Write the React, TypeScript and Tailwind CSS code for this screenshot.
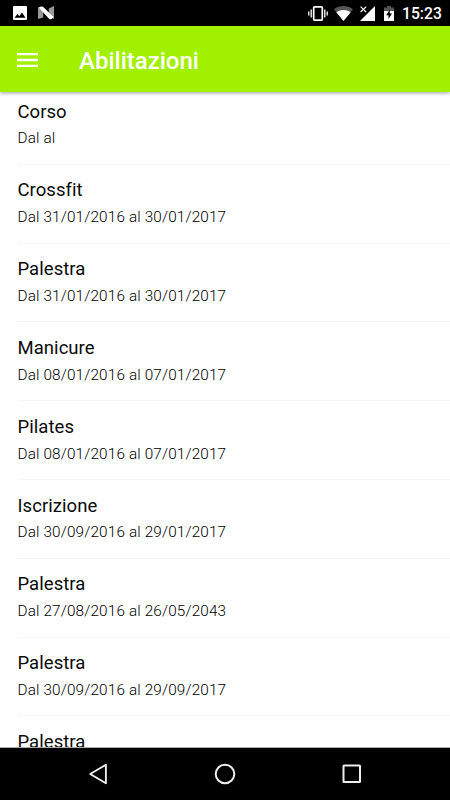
const items = [
  { name: 'Corso', dates: 'Dal al' },
  { name: 'Crossfit', dates: 'Dal 31/01/2016 al 30/01/2017' },
  { name: 'Palestra', dates: 'Dal 31/01/2016 al 30/01/2017' },
  { name: 'Manicure', dates: 'Dal 08/01/2016 al 07/01/2017' },
  { name: 'Pilates', dates: 'Dal 08/01/2016 al 07/01/2017' },
  { name: 'Iscrizione', dates: 'Dal 30/09/2016 al 29/01/2017' },
  { name: 'Palestra', dates: 'Dal 27/08/2016 al 26/05/2043' },
  { name: 'Palestra', dates: 'Dal 30/09/2016 al 29/09/2017' },
  { name: 'Palestra', dates: '' },
];

function StatusBar() {
  return (
    <div className="flex h-[26px] shrink-0 items-center bg-black pl-[13px] pr-[9px] text-white">
      <svg className="h-[14px] w-[14px]" viewBox="0 0 14 14">
        <rect width="14" height="14" rx="1" fill="#fff" />
        <path d="M1.500 11.800L4.500 8l1.800 2.200L9 6.500l3.500 5.300z" fill="#000" />
      </svg>
      <svg className="ml-[11px] h-[14px] w-4" viewBox="0 0 16 14">
        <path d="M0 1l5.200 5v5.500L0 13z" fill="#999" />
        <path d="M16 0v13l-5.200-5V2.500z" fill="#999" />
        <path d="M.5 1.500Q3 .2 5 .8L15.800 11.300Q13.500 13.800 11.300 13z" fill="#fff" />
      </svg>
      <div className="grow" />
      <svg className="h-[15px] w-5" viewBox="0 0 20 15">
        <rect x="5.700" y=".9" width="8.600" height="13.200" rx="1" fill="none" stroke="#fff" strokeWidth="1.700" />
        <path d="M3.200 3.500v8M16.800 3.500v8M.8 5.500v4M19.200 5.500v4" stroke="#fff" strokeWidth="1.300" />
      </svg>
      <svg className="ml-[6px] h-[15px] w-[19px]" viewBox="0 0 19 15">
        <path d="M0 3.200C5.500-1 13.500-1 19 3.200L9.500 15z" fill="#555" />
        <path d="M2.400 6.200c4.200-3 10-3 14.200 0L9.500 15z" fill="#fff" />
      </svg>
      <svg className="ml-[7px] h-[15px] w-[15px]" viewBox="0 0 15 15">
        <path d="M15 0v15H0z" fill="#fff" />
        <path d="M0 0h8v7H0z" fill="#000" />
        <path d="M.6 .6l5.600 5.600M6.200 .6L.6 6.200" stroke="#fff" strokeWidth="1.200" />
      </svg>
      <svg className="ml-[9px] h-[15px] w-[10px]" viewBox="0 0 10 15">
        <path d="M3 0h4v1.500h3V5H0V1.500h3z" fill="#555" />
        <path d="M0 5h10v10H0z" fill="#fff" />
        <path d="M5.800 3.500L2.200 9.200h2.300V13l3.500-5.600H5.800z" fill="#000" />
      </svg>
      <span className="ml-[8px] w-[39px] whitespace-nowrap pt-[2px] text-[15.700px] leading-[26px] font-medium">15:23</span>
    </div>
  );
}

function Header() {
  return (
    <header className="z-10 flex h-[66px] shrink-0 items-center bg-[#a0f000] pl-[17px] shadow-[0_1px_4px_rgba(0,0,0,0.4)]">
      <svg className="mt-[2px] h-[14px] w-[21px]" viewBox="0 0 21 14">
        <path d="M0 1.200h21M0 7h21M0 12.800h21" stroke="#fff" strokeWidth="2.300" />
      </svg>
      <h1 className="mt-[3px] ml-[41px] text-[24px] leading-[30px] font-medium text-white">Abilitazioni</h1>
    </header>
  );
}

function NavigationBar() {
  return (
    <nav className="flex h-[53px] shrink-0 items-center border-t border-[#aaa] bg-black pl-[87px]">
      <svg className="h-[22px] w-[22px]" viewBox="0 0 22 22">
        <path d="M18.900 1.700v18.600L3.200 11z" fill="none" stroke="#eee" strokeWidth="1.900" strokeLinejoin="round" />
      </svg>
      <svg className="ml-[105px] h-[22px] w-[22px]" viewBox="0 0 22 22">
        <circle cx="11" cy="11" r="9.300" fill="none" stroke="#eee" strokeWidth="2" />
      </svg>
      <svg className="ml-[105px] h-[22px] w-[22px]" viewBox="0 0 22 22">
        <rect x="2.500" y="2.500" width="16.500" height="16.500" rx=".5" fill="none" stroke="#eee" strokeWidth="2" />
      </svg>
    </nav>
  );
}

export default function App() {
  return (
    <div className="flex h-[800px] w-[450px] flex-col overflow-hidden bg-white font-['Roboto',sans-serif]">
      <StatusBar />
      <Header />
      <main className="min-h-0 grow overflow-hidden pl-[17.500px]">
        <ul className="-mt-[6px]">
          {items.map((item, i) => (
            <li key={i} className="h-[78.800px] border-b border-[#f4f4f4] pt-[13.700px]">
              <p className="text-[18.500px] leading-[24px] tracking-[0.050px] text-[#0a0a0a]">{item.name}</p>
              <p className="mt-[4.700px] text-[15.300px] leading-[20px] font-light tracking-[0.150px] text-black">{item.dates}</p>
            </li>
          ))}
        </ul>
      </main>
      <NavigationBar />
    </div>
  );
}
